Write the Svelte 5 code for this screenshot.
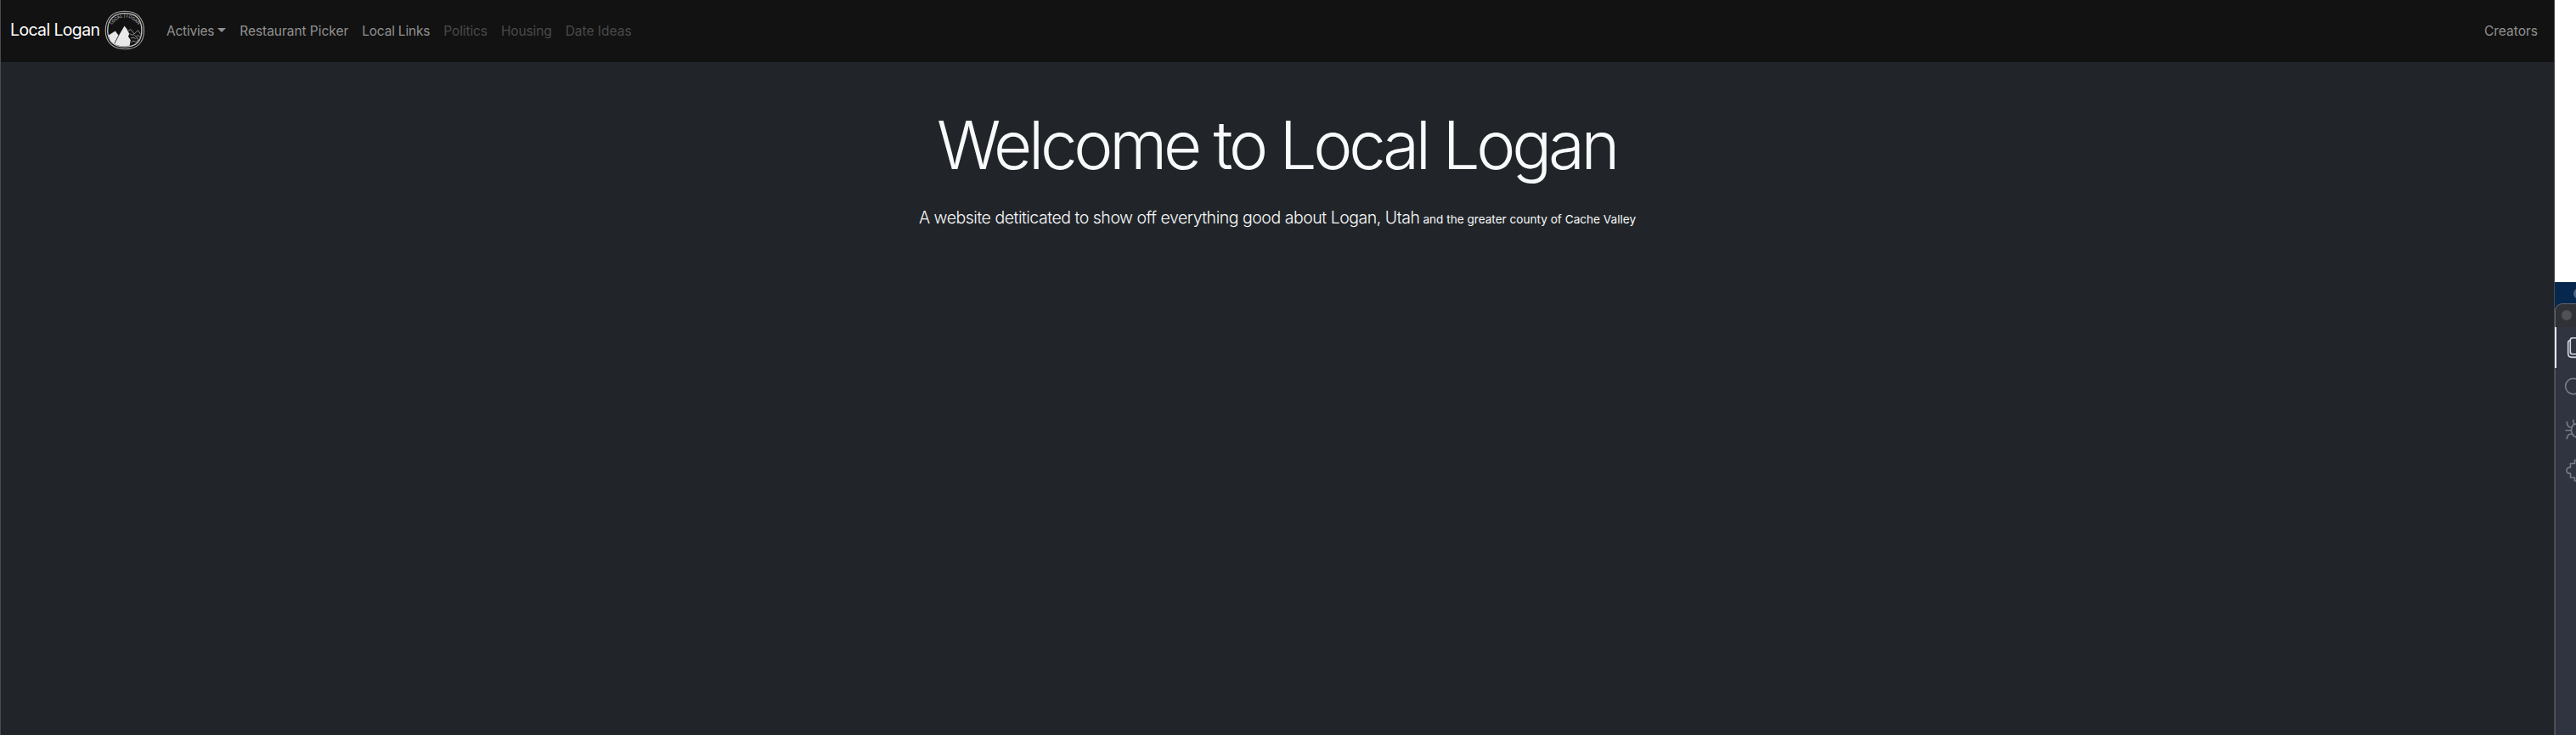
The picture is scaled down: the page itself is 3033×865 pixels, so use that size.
<script>
  const links = [
    { label: 'Restaurant Picker', spacing: -0.04 },
    { label: 'Local Links', spacing: -0.2 },
    { label: 'Politics', spacing: -0.1, disabled: true },
    { label: 'Housing', spacing: -0.12, disabled: true },
    { label: 'Date Ideas', spacing: 0, disabled: true }
  ];
</script>

<div class="screen">
  <div class="site">
    <nav class="navbar">
      <a class="brand" href="#home">
        <span>Local Logan</span>
        <svg class="logo" width="48" height="48" viewBox="0 0 48 48" fill="none">
          <path d="M24 1.2C39 1.2 46.4 10 46.5 24C46.5 38 38.5 45.8 24 45.8C9.5 45.8 1.3 37.5 1.2 24C1.2 10 9 1.2 24 1.2Z" stroke="#a9a9a9" stroke-width="1.1" />
          <path d="M24 3.7C37.5 3.7 43.7 11 43.9 23.5C44 36.5 37 43.2 24 43.2C11 43.2 3.8 36 3.7 24C3.7 11.5 10.5 3.7 24 3.7Z" stroke="#c4c4c4" stroke-width="1.3" />
          <path d="M4.8 29.5L12.7 24.5L16.8 30L23.5 18.5L26.4 22.2L29.2 27.8L28 31L30.8 35.2L29.6 41.8C20 43.8 11.5 41 7.3 36Z" fill="#e8e8e8" />
          <path d="M16.8 29.5L14.5 34L13 36.5L12 39" stroke="#242424" stroke-width=".9" />
          <path d="M27 25L31 22.5L35 28L39.5 23.6L42.6 28.5M29.5 27.5L32 29L34.5 28.8L37 31L40 29.5L42 32M31 33L34 32L36.5 33.5L38.5 32L40 35L37 37.5L34 36L31.5 38" stroke="#888" stroke-width="1" />
          <defs><path id="logo-arc" d="M8.3 17.5Q23.5 -1.4 40 17.5" /></defs>
          <text><textPath href="#logo-arc" startOffset="50%" text-anchor="middle">LOCAL | LOGAN</textPath></text>
        </svg>
      </a>
      <div class="links">
        <a class="link dropdown" href="#activities">Activies</a>
        {#each links as link}
          <a class="link" class:disabled={link.disabled} href="#nav" style="letter-spacing:{link.spacing}px">{link.label}</a>
        {/each}
      </div>
      <a class="link creators" href="#creators">Creators</a>
    </nav>
    <main>
      <h1>Welcome to Local Logan</h1>
      <p><span class="lead">A website detiticated to show off everything good about Logan, Utah</span><small>and the greater county of Cache Valley</small></p>
    </main>
  </div>

  <aside class="desktop">
    <div class="blank"></div>
    <div class="backdrop">
      <span class="blob"></span>
    </div>
    <div class="editor">
      <div class="titlebar"><span class="dot"></span></div>
      <div class="activity">
        <svg width="25" height="200" viewBox="0 0 25 200" fill="none" stroke="#747985" stroke-width="1.7">
          <path d="M0 0H2V48H0Z" fill="#e3e5ec" stroke="none" />
          <g stroke="#d6d9e3" stroke-width="1.6">
            <rect x="18.3" y="12.8" width="18" height="19" rx="2.5" />
            <path d="M18.5 15.7H18Q15.7 15.7 15.7 18V31Q15.7 35.4 20 35.4H30" />
          </g>
          <circle cx="21.8" cy="69.6" r="9.2" />
          <path d="M28 114.2H24Q19.8 115 19.5 121.5Q19.8 129 28 130M23.5 114.5Q21.5 113 21.7 108.5M20 117.8H18Q14.3 117 14.3 111M19.5 121.5H12.3M20 126H18Q14.3 127 14.3 132" />
          <path d="M27 156.5H23.5V160.5H18.5V165.2H17.5Q14 165.6 14 168.7Q14 171.8 17.5 172.2H18.5V177H23.5V181H27" stroke-linejoin="round" />
        </svg>
      </div>
    </div>
  </aside>
</div>

<style>
  :global(body) { margin: 0; overflow: hidden; background: #212529; }
  .screen { display: flex; width: 3033px; height: 865px; overflow: hidden; font-family: Inter, 'Liberation Sans', sans-serif; }
  a { text-decoration: none; }
  .site { box-sizing: border-box; width: 3008px; height: 865px; background: #212529; border-left: 1px solid #484c50; border-right: 1px solid #45494c; color: #f8f9fa; }
  .navbar { box-sizing: border-box; display: flex; align-items: center; height: 73px; padding: 0 19px 0 11px; background: #121212; }
  .brand { display: flex; align-items: center; width: 176px; color: #fff; font-size: 19.4px; letter-spacing: -.58px; white-space: nowrap; }
  .brand span { width: 111px; margin-top: -4px; }
  .logo { margin-top: -2px; flex: none; }
  .logo text { fill: #999; font-size: 5px; font-weight: 600; letter-spacing: -.1px; }
  .links { display: flex; }
  .link { padding: 0 8px; color: #919191; font-size: 15.5px; line-height: 24px; white-space: nowrap; }
  .link.disabled { color: #4a4a4a; }
  .dropdown { letter-spacing: -.22px; }
  .dropdown::after { content: ''; display: inline-block; margin-left: 3.9px; vertical-align: 4px; border: 5px solid transparent; border-top-color: currentColor; border-bottom: 0; }
  .creators { margin-left: auto; padding-right: 0; }
  main { text-align: center; padding-top: 50px; }
  h1 { margin: 0; font-size: 78px; line-height: 96px; font-weight: 300; letter-spacing: -4.28px; text-indent: -2px; }
  p { display: flex; justify-content: center; align-items: baseline; margin: 22px 0 0; line-height: 30px; white-space: nowrap; }
  .lead { font-size: 19.5px; font-weight: 350; letter-spacing: -.475px; }
  small { margin-left: 4px; font-size: 13.6px; }
  .desktop { width: 25px; height: 865px; display: flex; flex-direction: column; overflow: hidden; background: #303440; }
  .blank { height: 332px; flex: none; background: #fff; }
  .backdrop { height: 25px; flex: none; background: #06284f; overflow: hidden; }
  .blob { display: block; width: 13px; height: 13px; margin: 7px 0 0 22px; border-radius: 50%; background: #52637b; }
  .editor { flex: 1; background: linear-gradient(#06284f 12px, #303440 12px); }
  .titlebar { box-sizing: border-box; height: 28px; padding: 7px 0 0 7px; border: solid #66676a; border-width: 1px 0 0 1px; border-radius: 9px 0 0; background: #303136; }
  .dot { display: block; width: 12px; height: 12px; border-radius: 50%; background: #505157; }
  .activity { height: 480px; box-shadow: inset 1px 0 #55565b; }
  .activity svg { display: block; }
</style>
